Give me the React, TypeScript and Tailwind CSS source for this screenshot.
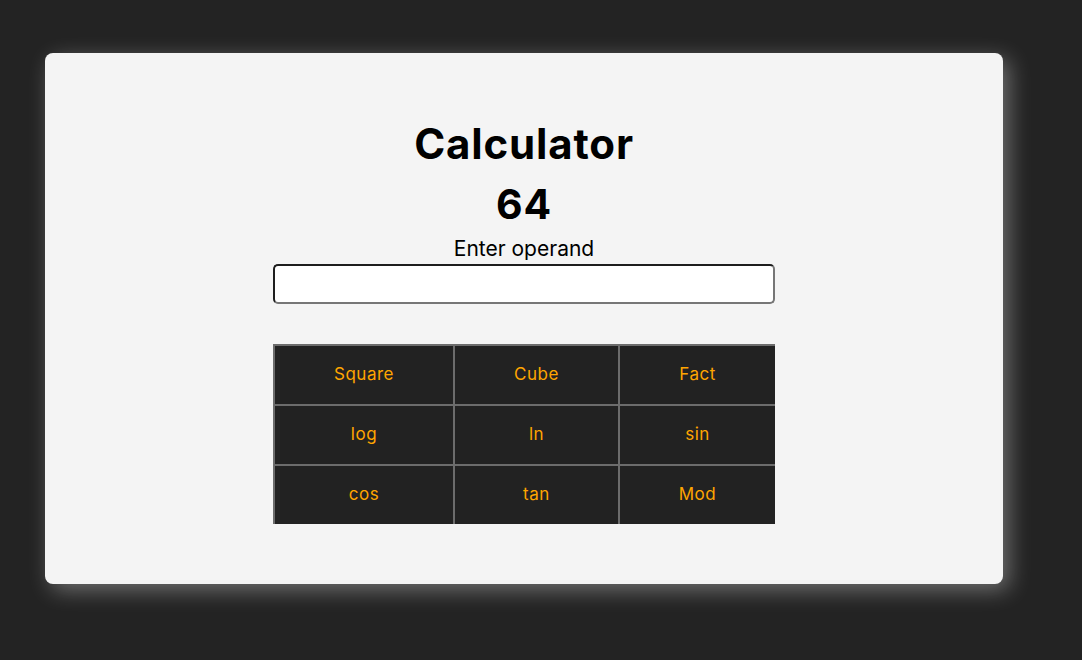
import React from 'react';

const ops = ['Square', 'Cube', 'Fact', 'log', 'ln', 'sin', 'cos', 'tan', 'Mod'];

const App = () => {
  return (
    <div className="min-h-[660px] w-full bg-[#232323] pt-[53px] pl-[45px] font-['Inter',sans-serif]">
      <div className="flex h-[531px] w-[958px] flex-col items-center rounded-lg bg-[#f4f4f4] shadow-[6px_6px_22px_rgba(255,255,255,0.35)]">
        <h1 className="mt-[67px] text-[42px] leading-[48px] font-bold tracking-[0.02em] text-black">Calculator</h1>
        <div className="mt-[11px] text-[41px] leading-[50px] font-bold tracking-[0.02em] text-black">64</div>
        <label className="mt-[8px] text-[21px] leading-[24px] text-black">Enter operand</label>
        <input
          type="text"
          className="mt-[3px] h-[40px] w-[502px] rounded-[5px] border-2 border-[#1e1e1e] border-b-[#767676] border-r-[#767676] bg-white px-2 outline-none"
        />
        {/* operations */}
        <div className="mt-[40px] grid w-[502px] grid-cols-[180px_165px_157px] bg-[#222]">
          {ops.map((op) => (
            <button
              key={op}
              className="flex h-[60px] items-center justify-center border-t-2 border-l-2 border-[#6c6c6c] text-[17px] tracking-[0.03em] text-[#ffa500]"
            >
              {op}
            </button>
          ))}
        </div>
      </div>
    </div>
  );
};

export default App;
